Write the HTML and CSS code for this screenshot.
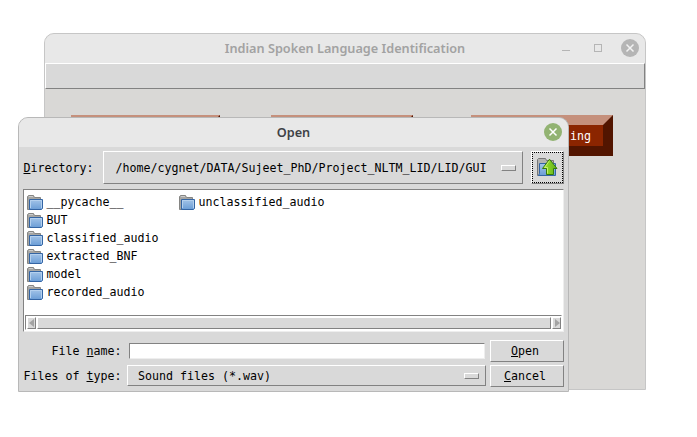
FILE: index.html
```
<!DOCTYPE html>
<html lang="en">
<head>
<meta charset="utf-8">
<title>Indian Spoken Language Identification</title>
<link rel="stylesheet" href="styles.css">
</head>
<body>
<svg class="defs" width="0" height="0" aria-hidden="true">
  <defs>
    <linearGradient id="blue" x1="0" y1="0" x2="0" y2="1"><stop offset="0" stop-color="#a3c4e8"/><stop offset="1" stop-color="#6b9dd6"/></linearGradient>
    <linearGradient id="leaf" x1="0" y1="0" x2="1" y2="0"><stop offset="0" stop-color="#a6e62c"/><stop offset="1" stop-color="#5cb01a"/></linearGradient>
    <symbol id="folder" viewBox="0 0 16 15">
      <path d="M.5 14.5V1.5L1.5.5H6.5L7.5 2.5H13.5V6H3V14.5Z" fill="#a6a6a4" stroke="#858583"/>
      <path d="M2 1.5H6" stroke="#ccc"/>
      <path d="M2.5 4.5H15.5V13.5L14.5 14.5H2.5Z" fill="url(#blue)" stroke="#3465a4"/>
      <path d="M3.5 13V5.5H14.5V13" fill="none" stroke="#b4d0ee"/>
    </symbol>
  </defs>
</svg>

<section class="window main">
  <header class="title"><span>Indian Spoken Language Identification</span>
    <div class="controls">
      <i class="minimize"></i><i class="maximize"></i>
      <svg class="close" width="18" height="18" viewBox="0 0 18 18"><circle cx="9" cy="9" r="9" fill="#b5b5b5"/><path d="M5.5 5.5L12.5 12.5M12.5 5.5L5.5 12.5" stroke="#f2f2f2" stroke-width="1.5"/></svg>
    </div>
  </header>
  <div class="menubar"></div>
  <div class="actions"><div class="action wide"></div><div class="action"></div><div class="action">ing</div></div>
</section>

<section class="window dialog">
  <header class="title"><span>Open</span>
    <div class="controls">
      <svg class="close" width="18" height="18" viewBox="0 0 18 18"><circle cx="9" cy="9" r="9" fill="#92b372"/><path d="M5.5 5.5L12.5 12.5M12.5 5.5L5.5 12.5" stroke="#fff" stroke-width="1.5"/></svg>
    </div>
  </header>
  <div class="directory">
    <label><u>D</u>irectory:</label>
    <div class="select raised"><span>/home/cygnet/DATA/Sujeet_PhD/Project_NLTM_LID/LID/GUI</span><i class="indicator raised"></i></div>
    <div class="up raised"><div class="focus">
      <svg width="22" height="20" viewBox="0 0 22 20">
        <path d="M1.5 18.5V2.5L2.5 1.5H9.5L10.5 3.5H17.5V8H4V18.5Z" fill="#b4b4b2" stroke="#777"/>
        <path d="M3.5 6.5H19.5V18.5H2.5L3.5 16.5Z" fill="url(#blue)" stroke="#3465a4"/>
        <path d="M13.5 2.2L21 11.5H17.5V17.5H10.5V11.5H6.5Z" fill="url(#leaf)" stroke="#347a0b"/>
        <path d="M13.3 4L8.6 10.5H11.5V16.5" fill="none" stroke="#d3f77d" stroke-opacity=".8"/>
      </svg>
    </div></div>
  </div>
  <div class="list">
    <div class="files">
      <div class="file"><svg><use href="#folder"/></svg><span>__pycache__</span></div>
      <div class="file"><svg><use href="#folder"/></svg><span>BUT</span></div>
      <div class="file"><svg><use href="#folder"/></svg><span>classified_audio</span></div>
      <div class="file"><svg><use href="#folder"/></svg><span>extracted_BNF</span></div>
      <div class="file"><svg><use href="#folder"/></svg><span>model</span></div>
      <div class="file"><svg><use href="#folder"/></svg><span>recorded_audio</span></div>
      <div class="file"><svg><use href="#folder"/></svg><span>unclassified_audio</span></div>
    </div>
    <div class="scrollbar">
      <div class="arrow raised"><svg width="6" height="8" viewBox="0 0 6 8"><path d="M5 0V8L0 4Z" fill="#a3a3a3"/></svg></div>
      <div class="thumb raised"></div>
      <div class="arrow raised"><svg width="6" height="8" viewBox="0 0 6 8"><path d="M1 0V8L6 4Z" fill="#a3a3a3"/></svg></div>
    </div>
  </div>
  <div class="form">
    <label>File <u>n</u>ame:</label>
    <div class="entry"></div>
    <div class="button raised"><span><u>O</u>pen</span></div>
    <label>Files of <u>t</u>ype:</label>
    <div class="select raised type"><span>Sound files (*.wav)</span><i class="indicator raised"></i></div>
    <div class="button raised"><span><u>C</u>ancel</span></div>
  </div>
</section>
</body>
</html>
```
FILE: styles.css
```
* { box-sizing: border-box; }
body {
  margin: 0;
  width: 697px;
  height: 437px;
  overflow: hidden;
  position: relative;
  background: #fff;
  color: #000;
  font: 11.63px/14px "DejaVu Sans Mono", monospace;
}
svg { display: block; }
.defs { position: absolute; }
u { text-decoration: underline; text-underline-offset: 1px; text-decoration-thickness: 1px; text-decoration-skip-ink: none; }

.window {
  position: absolute;
  background: #d9d9d9;
  border: 1px solid #b8b8b8;
  border-radius: 10px 10px 0 0;
  overflow: hidden;
}
.main { left: 44px; top: 33px; width: 602px; height: 357px; background: #d9d8d6; border-color: #c6c6c6; }
.dialog { left: 18px; top: 117px; width: 551px; height: 275px; }

.title {
  display: grid;
  grid-template-columns: 1fr auto 1fr;
  align-items: center;
  height: 29px;
  padding-bottom: 1px;
  background: #e8e8e8;
  color: #3e4246;
  font: 600 12.7px/18px "Noto Sans", sans-serif;
}
.title span { grid-column: 2; }
.main .title { color: #a2a2a2; }
.controls { grid-column: 3; display: flex; justify-content: flex-end; align-items: center; padding-right: 6px; }
.minimize { width: 8px; height: 1px; background: #b5b5b5; margin: 4px 24px 0 0; }
.maximize { width: 8px; height: 8px; border: 1px solid #b5b5b5; margin-right: 19px; }

.raised { border: 1px solid; border-color: #fff #828282 #828282 #fff; background: #d9d9d9; }
.menubar { height: 26px; border: 1px solid; border-color: #fff #828282 #828282 #fff; background: #d9d9d9; }
.actions { display: flex; gap: 58px; padding: 26px 0 0 26px; }
.action {
  width: 142px;
  height: 41px;
  border: 10px solid;
  border-color: #c5907c #521500 #521500 #c5907c;
  background: #8b2500;
  color: #fff;
  text-align: right;
  padding: 4px 12px 0 0;
}
.action.wide { width: 149px; margin-right: -7px; }

.directory { display: flex; padding: 4px 4px 0; height: 37px; align-items: center; }
.directory label { width: 80px; padding-left: .5px; }
.select { display: flex; align-items: center; justify-content: space-between; white-space: nowrap; }
.directory .select { width: 420px; height: 33px; padding: 0 6px 0 11.5px; }
.indicator { width: 15px; height: 6px; }
.up { width: 33px; height: 33px; margin-left: 8px; }
.focus {
  width: 31px;
  height: 31px;
  display: flex;
  padding: 4px 0 0 3px;
  border: 1px dotted #000;
}

.list {
  margin: 5px 4px 0;
  width: 541px;
  height: 143px;
  border: 1px solid;
  border-color: #828282 #eee #eee #828282;
  background: #fff;
  padding: 4px 1px 1px;
}
.files { display: grid; grid-template-rows: repeat(6, 18px); grid-auto-flow: column; grid-auto-columns: 152px; height: 121px; padding-left: 2px; }
.file { display: flex; gap: 3.5px; height: 17px; white-space: nowrap; }
.file svg { width: 16px; height: 15px; flex: none; margin-top: 1px; }
.file span { margin-top: 1px; }
.scrollbar { display: flex; gap: 1px; height: 15px; padding: 1px 0 0 1px; border: 1px solid; border-color: #828282 #fff #fff #828282; }
.arrow { width: 9px; height: 12px; flex: none; display: flex; align-items: center; justify-content: center; }
.thumb { flex: 1; height: 12px; }

.form {
  display: grid;
  grid-template-columns: 100px 359px 74px;
  grid-template-rows: 22px 22px;
  column-gap: 4px;
  row-gap: 3px;
  padding: 8px 4px 0;
  align-items: center;
}
.form label { text-align: right; padding-right: 1.5px; white-space: nowrap; }
.entry { height: 16px; width: 356px; margin-left: 2px; border: 1px solid; border-color: #828282 #eee #eee #828282; background: #fff; }
.type { height: 21px; padding: 0 6px 0 10px; align-self: start; }
.button { height: 22px; display: flex; align-items: center; justify-content: center; padding-right: 4px; }
```
